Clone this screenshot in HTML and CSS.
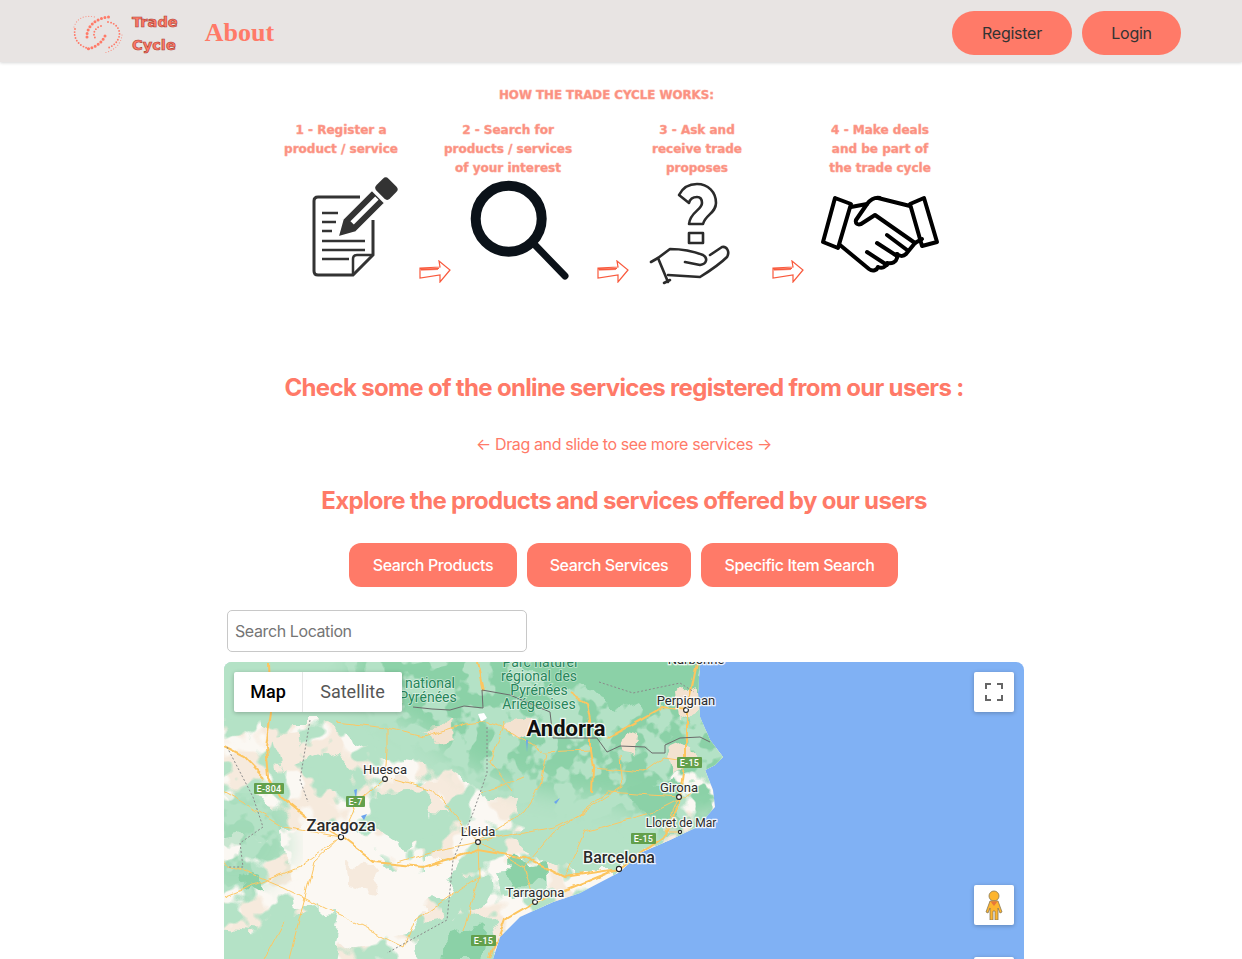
FILE: index.html
```html
<!DOCTYPE html>
<html>
    <head>
        <meta charset="utf-8">
        <title>Trade Cycle</title>
        <link rel="stylesheet" href="styles.css">
    </head>
    <body>
        <header class="topbar">
            <div class="brand">
                <svg class="logo" width="54" height="40" viewBox="0 0 54 40">
                    <g fill="none" stroke="#ff7a68" stroke-linecap="round">
                        <path class="dots-fine" d="M3 14C6 5 13 2 24 4"/>
                        <path class="dots-fine" d="M51 22C50 32 42 38 33 40"/>
                        <path class="dots-mid" d="M4 16C2 26 8 34 20 36"/>
                        <path class="dots-mid" d="M30 13C23 15 21 22 25 26"/>
                        <path class="dots-mid" d="M37 9C46 10 50 18 48 24C46 30 42 33 37 35"/>
                        <path class="dots-big" d="M16 24C15 15 24 5 38 4"/>
                        <path class="dots-big" d="M34 23C30 31 22 36 14 36"/>
                    </g>
                </svg>
                <div class="brand-name">Trade<br>Cycle</div>
            </div>
            <a class="about" href="#">About</a>
            <div class="auth">
                <button class="pill pill-register">Register</button>
                <button class="pill pill-login">Login</button>
            </div>
        </header>

        <section class="how">
            <div class="how-title">HOW THE TRADE CYCLE WORKS:</div>
            <div class="steps">
                <div class="step step-one">
                    <div class="step-text">1 - Register a<br>product / service</div>
                    <svg width="130" height="106" viewBox="0 0 130 106">
                        <path d="M84 20H42Q38 20 38 24V94Q38 98 42 98H77L97 78V43" fill="none" stroke="#333" stroke-width="3"/>
                        <path d="M77 98V82Q77 78 81 78H97" fill="none" stroke="#333" stroke-width="2.5"/>
                        <g stroke="#333" stroke-width="2.6">
                            <path d="M46 36H62M46 45H60M46 54H56M46 64H89M46 73H89M46 82H73"/>
                        </g>
                        <g transform="translate(62 60) rotate(-45)">
                            <path d="M0 0L16 -9H57V9H16Z" fill="#333" stroke="#fff" stroke-width="1.5"/>
                            <rect x="20" y="-2.4" width="35" height="4.8" fill="#fff"/>
                            <rect x="60" y="-9.5" width="17" height="19" rx="4" fill="#333"/>
                        </g>
                    </svg>
                </div>
                <svg class="arrow arrow-one" width="32" height="23" viewBox="0 0 32 23"><path d="M1 8L21 7L20 1L31 10L21 22L21 15L1 18ZM1 9L20 8.5M2 10L19 9.5" fill="none" stroke="#f9593c" stroke-width="1.2"/></svg>
                <div class="step step-two">
                    <div class="step-text">2 - Search for<br>products / services<br>of your interest</div>
                    <svg width="114" height="106" viewBox="0 0 114 106">
                        <circle cx="57.7" cy="41.7" r="33" fill="none" stroke="#0b1219" stroke-width="10"/>
                        <path d="M84 68L114 99" fill="none" stroke="#0b1219" stroke-width="7" stroke-linecap="round"/>
                    </svg>
                </div>
                <svg class="arrow arrow-two" width="32" height="23" viewBox="0 0 32 23"><path d="M1 8L21 7L20 1L31 10L21 22L21 15L1 18ZM1 9L20 8.5M2 10L19 9.5" fill="none" stroke="#f9593c" stroke-width="1.2"/></svg>
                <div class="step step-three">
                    <div class="step-text">3 - Ask and<br>receive trade<br>proposes</div>
                    <svg width="120" height="106" viewBox="0 0 120 106">
                        <g fill="none" stroke="#2b2b2b" stroke-width="2.6" stroke-linejoin="round" stroke-linecap="round">
                            <path d="M42 18C46 10 53 7 60 7C71 7 79 15 79 26C79 36 68 38 66 47H52C53 35 65 33 65 26C65 22 63 20 60 20C56 20 53 22 52 26Z"/>
                            <rect x="52" y="56" width="14" height="10"/>
                            <path d="M14 85L21 81L33 72C45 72 56 74 66 78C71 81 70 87 63 88L48 85"/>
                            <path d="M31 98L63 100C71 95 82 88 90 80C93 75 90 69 85 70L73 78"/>
                            <path d="M21 81L31 105M27 106L33 103"/>
                        </g>
                    </svg>
                </div>
                <svg class="arrow arrow-three" width="32" height="23" viewBox="0 0 32 23"><path d="M1 8L21 7L20 1L31 10L21 22L21 15L1 18ZM1 9L20 8.5M2 10L19 9.5" fill="none" stroke="#f9593c" stroke-width="1.2"/></svg>
                <div class="step step-four">
                    <div class="step-text">4 - Make deals<br>and be part of<br>the trade cycle</div>
                    <svg width="130" height="106" viewBox="0 0 130 106">
                        <g fill="none" stroke="#000" stroke-width="4" stroke-linejoin="round" stroke-linecap="round">
                            <path d="M20 21L36 27L23 71L8 65Z"/>
                            <path d="M95 27L109 21L122 65L107 69Z"/>
                            <path d="M36 30L52 27M63 21L95 29M52 27C56 22 60 20 65 21"/>
                            <path d="M52 27L41 43C40 47 43 48 46 47L60 38L100 66L91 77C88 80 84 79 82 77"/>
                            <path d="M25 68L54 92C58 95 62 93 63 90C67 92 71 90 72 86C77 87 81 85 82 81V77"/>
                            <path d="M72 58L92 73M62 66L82 79M52 75L72 88"/>
                            <path d="M100 66L107 62"/>
                        </g>
                    </svg>
                </div>
            </div>
        </section>

        <main class="content">
            <h2 class="online-title">Check some of the online services registered from our users :</h2>
            <p class="drag-hint">← Drag and slide to see more services →</p>
            <h2 class="explore-title">Explore the products and services offered by our users</h2>
            <div class="search-buttons">
                <button class="search-btn btn-products">Search Products</button>
                <button class="search-btn btn-services">Search Services</button>
                <button class="search-btn btn-specific">Specific Item Search</button>
            </div>
            <input class="location" type="text" placeholder="Search Location">

            <div class="map">
                <svg class="map-art" width="800" height="297" viewBox="0 0 800 297">
                    <defs>
                        <filter id="rough" x="-5%" y="-5%" width="110%" height="110%">
                            <feTurbulence type="fractalNoise" baseFrequency="0.04" numOctaves="3" seed="7"/>
                            <feDisplacementMap in="SourceGraphic" scale="26" xChannelSelector="R" yChannelSelector="G"/>
                        </filter>
                        <filter id="wiggle" x="-5%" y="-5%" width="110%" height="110%">
                            <feTurbulence type="fractalNoise" baseFrequency="0.06" numOctaves="2" seed="3"/>
                            <feDisplacementMap in="SourceGraphic" scale="7" xChannelSelector="R" yChannelSelector="G"/>
                        </filter>
                        <filter id="blotch-light" x="0" y="0" width="100%" height="100%" color-interpolation-filters="sRGB">
                            <feTurbulence type="fractalNoise" baseFrequency="0.03" numOctaves="3" seed="11"/>
                            <feColorMatrix values="0 0 0 0 .706  0 0 0 0 .886  0 0 0 0 .776  14 0 0 0 -6.6"/>
                        </filter>
                        <filter id="blotch-cream" x="0" y="0" width="100%" height="100%" color-interpolation-filters="sRGB">
                            <feTurbulence type="fractalNoise" baseFrequency="0.025" numOctaves="3" seed="23"/>
                            <feColorMatrix values="0 0 0 0 .965  0 0 0 0 .918  0 0 0 0 .867  14 0 0 0 -6.8"/>
                        </filter>
                        <filter id="blotch-dark" x="0" y="0" width="100%" height="100%" color-interpolation-filters="sRGB">
                            <feTurbulence type="fractalNoise" baseFrequency="0.045" numOctaves="3" seed="5"/>
                            <feColorMatrix values="0 0 0 0 .545  0 0 0 0 .82  0 0 0 0 .655  14 0 0 0 -6.6"/>
                        </filter>
                        <filter id="soft"><feGaussianBlur stdDeviation="12"/></filter>
                        <mask id="north">
                            <path d="M130 -20H520V150L440 170L400 140L330 130L250 110L200 70L130 30Z" fill="white" filter="url(#soft)"/>
                            <path d="M-20 140H50L70 190L30 230H-20Z" fill="#777" filter="url(#soft)"/>
                        </mask>
                        <clipPath id="land">
                            <path d="M0 0H476L474 31L476 55L486 78L499 95L491 103L481 108L489 128L491 145L473 165L446 178L416 191L396 210L356 231L329 240L296 255L276 275L269 297H0Z"/>
                        </clipPath>
                    </defs>
                    <rect width="800" height="297" fill="#80b1f4"/>
                    <g clip-path="url(#land)">
                        <rect width="800" height="297" fill="#fbf8f3"/>
                        <rect width="800" height="297" filter="url(#blotch-cream)"/>
                        <rect width="800" height="297" filter="url(#blotch-light)"/>
                        <g filter="url(#rough)" fill="#fbf8f3">
                            <path d="M60 170L120 165L175 205L215 215L190 270L120 285L70 240Z"/>
                            <path d="M200 195L240 200L225 240L200 235Z"/>
                        </g>
                        <g filter="url(#rough)" fill="#f6eadd">
                            <path d="M165 115L215 125L225 150L185 145Z"/>
                            <path d="M45 75L75 70L80 100L55 110Z"/>
                            <path d="M120 200L160 205L150 230L125 225Z"/>
                        </g>
                        <g filter="url(#rough)" fill="#b4e2c6">
                            <path d="M-10 -10H500V110L440 112L425 170L395 195L335 165L300 135L265 135L225 105L160 95L100 60L50 60L-10 50Z"/>
                            <path d="M153 131L198 128L215 170L180 185L150 165Z"/>
                            <path d="M-10 145L35 140L60 155L50 178L20 175L-10 180Z"/>
                            <path d="M300 130L400 130L450 170L400 205L330 205L290 180Z"/>
                            <path d="M273 208L320 205L325 235L280 240Z"/>
                            <path d="M196 262L265 250L280 310H190Z"/>
                            <path d="M-10 268L36 272L50 310H-10Z"/>
                            <path d="M60 255L115 250L105 300H60Z"/>
                            <path d="M230 215L262 210L265 240L215 262Z"/>
                            <path d="M75 100L115 85L130 115L100 125Z"/>
                        </g>
                        <rect width="800" height="297" filter="url(#blotch-dark)" mask="url(#north)"/>
                        <g filter="url(#rough)" fill="#8bd1a7">
                            <path d="M270 -10H476V30L420 55L370 30L330 20Z"/>
                            <path d="M290 200L320 198L322 222L292 225Z"/>
                            <path d="M20 205L35 212L38 235L22 225Z"/>
                            <path d="M225 270L262 262L258 300H220Z"/>
                            <path d="M405 125L450 115L455 150L425 160Z"/>
                        </g>
                        <g filter="url(#rough)" fill="#f3e2d0">
                            <path d="M442 88L470 82L474 105L450 112Z"/>
                            <path d="M200 66L230 64L232 76L208 80Z"/>
                            <path d="M452 30L472 25L472 52L455 58Z"/>
                            <path d="M280 60L305 52L310 72L288 78Z"/>
                            <path d="M400 76L418 80L412 92L396 88Z"/>
                        </g>
                        <path d="M254 52L260 51L263 56L257 60Z" fill="#fff"/>

                        <g filter="url(#wiggle)" fill="none" stroke="#fdc763" stroke-width="1">
                            <path d="M161 117L133 141L117 175M167 116L210 128L233 155L254 180"/>
                            <path d="M113 60L163 66L163 88L161 117M163 66L200 75L240 62L262 60L290 70L320 90L366 88"/>
                            <path d="M254 180L255 215L240 270M117 175L75 205L0 235M117 175L90 200L65 297M0 130L60 165L117 175"/>
                            <path d="M323 91L316 125L300 150L254 180M396 95L399 125L360 150L330 165L254 180"/>
                            <path d="M311 240L300 205L330 170L385 130L455 135M455 135L440 170L456 170"/>
                            <path d="M369 105L420 110L440 95L462 98M190 260L225 235L255 215M110 250L180 285L190 260M300 205L275 190L254 180"/>
                            <path d="M0 200L60 225L110 250M40 297L60 260M340 215L360 170L430 150L470 130M280 60L266 100L290 130"/>
                            <path d="M255 130L275 125L300 115M173 200L205 190L254 180"/>
                        </g>
                        <g filter="url(#wiggle)" fill="none" stroke="#fdc55e" stroke-width="2">
                            <path d="M47 51L42 85L45 115L57 135L83 156L117 175L150 200L200 205L254 187L300 195L340 215L395 207"/>
                            <path d="M0 85L20 95L40 116M395 207L440 175L456 140L462 98L462 48L472 0"/>
                            <path d="M346 30L363 41L366 58L366 88L369 105L368 131M383 76L416 58L439 45L462 48"/>
                            <path d="M395 207L350 225L311 240L280 258L266 297M253 0L259 28"/>
                            <path d="M45 0L47 51"/>
                        </g>
                        <path d="M189 45L208 47L226 48L240 44L259 46L258 28L286 33L326 50L329 76L373 76L383 90L396 84L421 85L428 91L441 91L441 83L456 76L476 75L486 80" fill="none" stroke="#6b6b6b" stroke-width="1"/>
                        <g fill="none" stroke="#8a8a8a" stroke-dasharray="2 2">
                            <path d="M3 85L29 135L39 165L16 181L19 205L3 205"/>
                            <path d="M86 58L76 118L84 140"/>
                            <path d="M263 65L263 111L249 151L229 198L223 258L163 291"/>
                            <path d="M375 20L409 31L456 21L470 30"/>
                        </g>
                        <g fill="#6aa3ee">
                            <path d="M130 128L133 127L132 137Z"/>
                            <path d="M137 154L143 152L140 158Z"/>
                            <path d="M302 78L304 78L303 90Z"/>
                            <path d="M330 140L336 136L332 142Z"/>
                        </g>
                    </g>

                    <g class="shield">
                        <rect x="30" y="121" width="30" height="11" rx="1"/><text x="45" y="130">E-804</text>
                        <rect x="122" y="134" width="19" height="11" rx="1"/><text x="131.5" y="143">E-7</text>
                        <rect x="453" y="95" width="25" height="11" rx="1"/><text x="465.5" y="104">E-15</text>
                        <rect x="407" y="171" width="25" height="11" rx="1"/><text x="419.5" y="180">E-15</text>
                        <rect x="247" y="273" width="25" height="11" rx="1"/><text x="259.5" y="282">E-15</text>
                    </g>

                    <g class="city-dots">
                        <circle cx="117" cy="175" r="2.6"/>
                        <circle cx="161" cy="117" r="2.4"/>
                        <circle cx="254" cy="180" r="2.4"/>
                        <circle cx="395" cy="207" r="2.6"/>
                        <circle cx="311" cy="240" r="2.4"/>
                        <circle cx="455" cy="135" r="2.4"/>
                        <circle cx="462" cy="48" r="2.4"/>
                        <circle cx="456" cy="170" r="1.6"/>
                    </g>

                    <g class="labels">
                        <text class="place-park" x="316" y="5">Parc naturel</text>
                        <text class="place-park" x="315" y="19">régional des</text>
                        <text class="place-park" x="315" y="33">Pyrénées</text>
                        <text class="place-park" x="315" y="47">Ariégeoises</text>
                        <text class="place-park" x="206" y="26">national</text>
                        <text class="place-park" x="204" y="40">Pyrénées</text>
                        <text class="place-big" x="342" y="74">Andorra</text>
                        <text class="place-md" x="117" y="169">Zaragoza</text>
                        <text class="place-bc" x="395" y="201">Barcelona</text>
                        <text class="place-sm" x="462" y="43">Perpignan</text>
                        <text class="place-sm" x="455" y="130">Girona</text>
                        <text class="place-sm" x="161" y="112">Huesca</text>
                        <text class="place-sm" x="254" y="174">Lleida</text>
                        <text class="place-sm" x="311" y="235">Tarragona</text>
                        <text class="place-xs" x="457" y="165">Lloret de Mar</text>
                        <text class="place-sm" x="472" y="2">Narbonne</text>
                    </g>
                </svg>

                <div class="map-types">
                    <div class="map-type map-type-on">Map</div>
                    <div class="map-type">Satellite</div>
                </div>
                <div class="map-ctrl fullscreen">
                    <svg width="18" height="18" viewBox="0 0 18 18"><path d="M1 6V1H6M12 1H17V6M17 12V17H12M6 17H1V12" fill="none" stroke="#666" stroke-width="2"/></svg>
                </div>
                <div class="map-ctrl pegman">
                    <svg width="18" height="30" viewBox="0 0 18 30">
                        <circle cx="9" cy="6" r="5" fill="#fdb52f" stroke="#8a7a55" stroke-width=".8"/>
                        <path d="M5 11H13L17 22L15 23L13 18V30H10V21H8V30H5V18L3 23L1 22Z" fill="#fdb52f" stroke="#8a7a55" stroke-width=".8"/>
                        <path d="M5.5 11.5H12.5L9 16Z" fill="#e8773a"/>
                    </svg>
                </div>
                <div class="map-ctrl zoom-top"></div>
            </div>
        </main>
    </body>
</html>
```

FILE: styles.css
```css
html, body {
    height: 959px;
    overflow: hidden;
}
body {
    margin: 0;
    background-color: white;
    font-family: Inter, "Liberation Sans", sans-serif;
    color: #333;
}

/* top bar */
.topbar {
    display: flex;
    align-items: center;
    box-sizing: border-box;
    height: 62px;
    padding: 4px 61px 0 71px;
    background-color: #e8e4e3;
    box-shadow: 0 1px 3px rgba(0, 0, 0, 0.16);
}
.brand {
    display: flex;
    align-items: center;
    gap: 7px;
}
.logo {
    display: block;
    overflow: visible;
}
.dots-fine {
    stroke-width: 1.2;
    stroke-dasharray: 0 2.8;
    opacity: 0.75;
}
.dots-mid {
    stroke-width: 1.9;
    stroke-dasharray: 0 3;
}
.dots-big {
    stroke-width: 3;
    stroke-dasharray: 0 3.6;
}
.brand-name {
    font-family: "DejaVu Sans", sans-serif;
    font-weight: bold;
    font-size: 14.6px;
    line-height: 23px;
    color: #ff7a68;
    -webkit-text-stroke: 0.6px #a83a30;
}
.about {
    margin-left: 27px;
    font-family: "Liberation Serif", serif;
    font-weight: bold;
    font-size: 26px;
    color: #ff7a68;
    text-decoration: none;
}
.auth {
    display: flex;
    gap: 10px;
    margin-left: auto;
}
.pill {
    height: 44px;
    border: none;
    border-radius: 22px;
    background-color: #ff7a68;
    color: #333;
    font-family: inherit;
    font-size: 16px;
    letter-spacing: -0.25px;
}
.pill-register {
    width: 120px;
}
.pill-login {
    width: 99px;
}

/* how it works */
.how {
    padding-top: 26px;
}
.how-title {
    margin-left: 499px;
    height: 32px;
    font-family: "DejaVu Sans", sans-serif;
    font-weight: bold;
    font-size: 11.8px;
    line-height: 14px;
    white-space: nowrap;
    color: #fb9080;
    text-shadow: 0 0 1px #ffc4ba;
    -webkit-text-stroke: 0.3px #fda99c;
}
.steps {
    display: flex;
    align-items: flex-end;
    margin-left: 276px;
}
.step svg {
    display: block;
    overflow: visible;
}
.step-text {
    height: 57px;
    padding-top: 1px;
    margin-bottom: -1px;
    font-family: "DejaVu Sans", sans-serif;
    font-weight: bold;
    font-size: 12px;
    line-height: 19px;
    text-align: center;
    white-space: nowrap;
    color: #fb9080;
    text-shadow: 0 0 1px #ffc4ba;
    -webkit-text-stroke: 0.3px #fda99c;
}
.step-one {
    width: 130px;
}
.step-two {
    width: 114px;
}
.step-two .step-text {
    margin-left: -10px;
    margin-right: -10px;
}
.step-three {
    width: 120px;
}
.step-four {
    width: 130px;
}
.arrow {
    display: block;
    flex: none;
}
.arrow-one {
    margin-left: 13px;
}
.arrow-two {
    margin-left: 32px;
    margin-right: 8px;
}
.arrow-three {
    margin-left: 15px;
    margin-right: 11px;
}

/* middle text and buttons */
.content {
    width: 800px;
    margin: 0 auto;
    padding-left: 6px;
}
.online-title, .explore-title {
    margin: 0;
    color: #ff7a68;
    font-size: 24px;
    font-weight: 700;
    letter-spacing: -0.67px;
    line-height: 30px;
    text-align: center;
    white-space: nowrap;
}
.online-title {
    margin-top: 90px;
}
.drag-hint {
    margin: 29px 0 0;
    color: #ff7a68;
    font-size: 16px;
    letter-spacing: -0.38px;
    line-height: 24px;
    text-align: center;
}
.explore-title {
    margin-top: 30px;
}
.search-buttons {
    display: flex;
    justify-content: center;
    gap: 10px;
    margin: 27px 0 0 -1px;
}
.search-btn {
    height: 44px;
    border: none;
    border-radius: 12px;
    background-color: #ff7a68;
    color: white;
    font-family: inherit;
    font-size: 16px;
    font-weight: 500;
    letter-spacing: -0.4px;
}
.btn-products {
    width: 168px;
}
.btn-services {
    width: 164px;
}
.btn-specific {
    width: 197px;
}
.location {
    display: block;
    box-sizing: border-box;
    width: 300px;
    height: 42px;
    margin: 23px 0 10px 3px;
    padding: 0 7px;
    border: 1px solid #c8c8c8;
    border-radius: 5px;
    font-family: inherit;
    font-size: 16px;
    letter-spacing: -0.4px;
}

/* map */
.map {
    position: relative;
    width: 800px;
    height: 297px;
    overflow: hidden;
    border-radius: 8px 8px 0 0;
}
.map-art {
    display: block;
}
.shield rect {
    fill: #63a04c;
}
.shield text {
    fill: white;
    font-family: Roboto, sans-serif;
    font-size: 9px;
    font-weight: 500;
    text-anchor: middle;
    letter-spacing: 0.3px;
}
.city-dots circle {
    fill: white;
    stroke: #222;
    stroke-width: 1.1;
}
.labels text {
    font-family: Roboto, sans-serif;
    text-anchor: middle;
    fill: #2b2b2b;
    stroke: rgba(255, 255, 255, 0.85);
    stroke-width: 2.5px;
    paint-order: stroke;
}
.labels .place-park {
    font-size: 14px;
    fill: #27855a;
    stroke: rgba(255, 255, 255, 0.5);
    stroke-width: 1.5px;
}
.labels .place-big {
    font-size: 22px;
    font-weight: 700;
    fill: #111;
}
.labels .place-md {
    font-size: 16.5px;
    font-weight: 500;
}
.labels .place-bc {
    font-size: 16px;
    font-weight: 500;
}
.labels .place-sm {
    font-size: 13px;
}
.labels .place-xs {
    font-size: 12px;
}
.map-types {
    position: absolute;
    top: 10px;
    left: 10px;
    display: flex;
    height: 40px;
    border-radius: 2px;
    background-color: white;
    box-shadow: 0 1px 4px rgba(0, 0, 0, 0.25);
    font-family: Roboto, sans-serif;
    font-size: 18px;
    line-height: 40px;
    text-align: center;
    color: #565656;
}
.map-type {
    width: 99px;
}
.map-type-on {
    width: 68px;
    border-right: 1px solid #e6e6e6;
    font-weight: 500;
    color: black;
}
.map-ctrl {
    position: absolute;
    left: 750px;
    display: flex;
    align-items: center;
    justify-content: center;
    width: 40px;
    height: 40px;
    border-radius: 2px;
    background-color: white;
    box-shadow: 0 1px 4px rgba(0, 0, 0, 0.25);
}
.fullscreen {
    top: 10px;
}
.pegman {
    top: 223px;
}
.zoom-top {
    top: 295px;
    height: 81px;
}
```
